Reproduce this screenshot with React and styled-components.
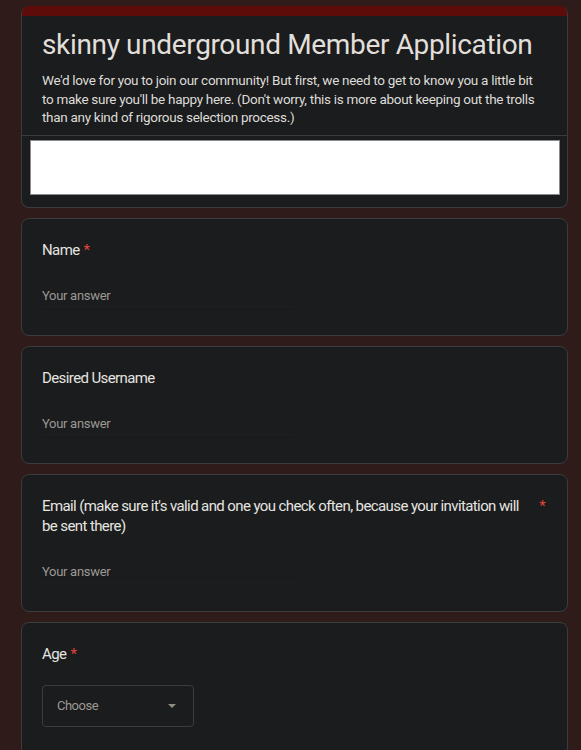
import React from "react";
import styled, {createGlobalStyle} from "styled-components";

const GlobalStyle = createGlobalStyle`
	html, body {
		margin: 0;
		padding: 0;
		background: #301b1b;
	}
	body {
		font-family: Roboto, "Liberation Sans", Arial, sans-serif;
		color: #e3e1dd;
	}
`

const questions = [
	{label: "Name", required: true, kind: "text"},
	{label: "Desired Username", required: false, kind: "text"},
	{label: "Email (make sure it's valid and one you check often, because your invitation will be sent there)", required: true, kind: "text"},
	{label: "Age", required: true, kind: "select"},
]

const App = () => {
	return (
		<>
			<GlobalStyle />
			<Page>
				<HeaderCard>
					<RedBar />
					<HeaderBody>
						<Title>skinny underground Member Application</Title>
						<Description>
							We'd love for you to join our community! But first, we need to get to know you a little bit
							to make sure you'll be happy here. (Don't worry, this is more about keeping out the trolls
							than any kind of rigorous selection process.)
						</Description>
					</HeaderBody>
					<Divider />
					<BannerArea>
						<WhiteBanner />
					</BannerArea>
				</HeaderCard>

				{questions.map(q => (
					<QuestionCard key={q.label}>
						<QuestionTitle>
							<QuestionText>{q.label}</QuestionText>
							{q.required && <Star>*</Star>}
						</QuestionTitle>
						{q.kind === "select"
							? (
								<SelectBox>
									<SelectText>Choose</SelectText>
									<Caret />
								</SelectBox>
							)
							: <AnswerInput>Your answer</AnswerInput>
						}
					</QuestionCard>
				))}
			</Page>
		</>
	)
}

const Page = styled.div`
	display: flex;
	flex-direction: column;
	gap: 10px;
	width: 547px;
	padding: 6px 0 40px 21px;
`

const Card = styled.div`
	background: #1a1c1e;
	border: 1px solid #3b3c3e;
	border-radius: 8px;
	overflow: hidden;
`

const HeaderCard = styled(Card)`
	border-top: none;
`

const RedBar = styled.div`
	height: 10px;
	background: #5e0c0a;
`

const HeaderBody = styled.div`
	padding: 11px 24px 8px 20px;
`

const Title = styled.div`
	font-size: 28px;
	line-height: 36px;
	letter-spacing: -0.35px;
	color: #e2dfda;
`

const Description = styled.div`
	margin-top: 8px;
	font-size: 13.5px;
	line-height: 18.5px;
	letter-spacing: -0.3px;
	color: #dedbd6;
`

const Divider = styled.div`
	height: 1px;
	background: #3b3c3e;
`

const BannerArea = styled.div`
	padding: 4px 7px 12px 8px;
`

const WhiteBanner = styled.div`
	height: 53px;
	background: #ffffff;
	border: 1px solid #8a8a8a;
`

const QuestionCard = styled(Card)`
	padding: 21px 22px 28px 20px;
`

const QuestionTitle = styled.div`
	display: flex;
	align-items: flex-start;
	font-size: 15px;
	line-height: 20px;
	letter-spacing: -0.6px;
	color: #e6e4e0;
`

const QuestionText = styled.div`
	flex: 0 1 auto;
`

const Star = styled.span`
	flex: none;
	margin-left: 4px;
	color: #e2443a;
	font-size: 15px;
`

const AnswerInput = styled.div`
	margin-top: 26px;
	width: 50%;
	font-size: 13px;
	line-height: 20px;
	letter-spacing: -0.3px;
	color: #9c9893;
	border-bottom: 1px solid #1e2022;
`

const SelectBox = styled.div`
	margin-top: 21px;
	width: 152px;
	height: 42px;
	box-sizing: border-box;
	border: 1px solid #3b3c3e;
	border-radius: 4px;
	display: flex;
	align-items: center;
	justify-content: space-between;
	padding: 0 17px 0 14px;
`

const SelectText = styled.span`
	font-size: 13px;
	letter-spacing: -0.5px;
	color: #9c9893;
`

const Caret = styled.span`
	width: 0;
	height: 0;
	border-left: 4px solid transparent;
	border-right: 4px solid transparent;
	border-top: 4px solid #8f8a84;
`

export default App;
